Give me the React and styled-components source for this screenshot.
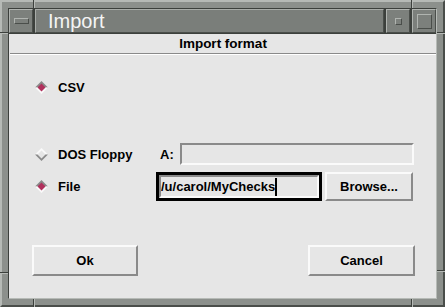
import React from "react";
import styled, { createGlobalStyle } from "styled-components";

const GlobalStyle = createGlobalStyle`
  html, body { margin: 0; padding: 0; background: #8c908c; }
  body { font-family: "Liberation Sans", Arial, Helvetica, sans-serif; }
  * { box-sizing: border-box; }
`;

const Window = styled.div`
  position: relative;
  width: 445px;
  height: 307px;
  background: #8c908c;
  border: 2px solid;
  border-color: #b6bab6 #4a4e4a #4a4e4a #b6bab6;
  padding: 6px;
`;

const Notch = styled.span`
  position: absolute;
  ${(p) =>
    p.$vertical
      ? `width: 2px; height: 8px; border-left: 1px solid #3c403c; border-right: 1px solid #b6bab6;`
      : `width: 8px; height: 2px; border-top: 1px solid #3c403c; border-bottom: 1px solid #b6bab6;`}
`;

const Inner = styled.div`
  height: 100%;
  border: 1px solid;
  border-color: #3c403c #b6bab6 #b6bab6 #3c403c;
  display: flex;
  flex-direction: column;
`;

const TitleBar = styled.div`
  display: flex;
  gap: 2px;
  height: 25px;
  background: #3c403c;
  border-bottom: 1px solid #3c403c;
`;

const TitleButton = styled.div`
  width: 24px;
  height: 24px;
  flex: none;
  background: #7c807c;
  border: 1px solid;
  border-color: #b0b4b0 #4a4e4a #4a4e4a #b0b4b0;
  display: flex;
  align-items: center;
  justify-content: center;
`;

const BevelShape = styled.span`
  display: block;
  width: ${(p) => p.$w}px;
  height: ${(p) => p.$h}px;
  border: 1px solid;
  border-color: #b0b4b0 #4a4e4a #4a4e4a #b0b4b0;
  background: #7c807c;
`;

const Title = styled.div`
  flex: 1;
  height: 24px;
  background: #7a7e7a;
  border: 1px solid;
  border-color: #a8aca8 #4a4e4a #4a4e4a #a8aca8;
  color: #f4f4f4;
  font-size: 20px;
  padding-left: 12px;
  display: flex;
  align-items: center;
`;

const Content = styled.div`
  flex: 1;
  background: #e6e6e6;
  display: flex;
  flex-direction: column;
  color: #000;
  font-size: 13px;
  font-weight: bold;
`;

const Header = styled.div`
  height: 20px;
  line-height: 19px;
  text-align: center;
  font-size: 13.5px;
  border-bottom: 1px solid #8a8a8a;
  margin-left: 1px;
  box-shadow: 0 1px 0 #ffffff;
`;

const Row = styled.div`
  display: grid;
  grid-template-columns: 121px 258px;
  align-items: center;
  padding-left: 26px;
  margin-top: ${(p) => p.$top}px;
  height: ${(p) => p.$h}px;
`;

const Option = styled.label`
  display: flex;
  align-items: center;
  gap: 10px;
`;

const Cell = styled.div`
  display: flex;
  align-items: center;
  gap: 3px;
  height: 100%;
`;

const DriveLabel = styled.span`
  width: 21px;
  padding-left: 4px;
  flex: none;
`;

const Field = styled.div`
  flex: 1;
  height: 22px;
  background: #e6e6e6;
  border: 2px solid;
  border-color: #8a8a8a #fafafa #fafafa #8a8a8a;
`;

const Focus = styled.div`
  width: 166px;
  height: 29px;
  border: 3px solid #000;
  flex: none;
`;

const FocusField = styled.div`
  height: 100%;
  background: #e6e6e6;
  border: 2px solid;
  border-color: #8a8a8a #fafafa #fafafa #8a8a8a;
  display: flex;
  align-items: center;
  white-space: nowrap;
  overflow: hidden;
  padding-left: 0;
`;

const Caret = styled.span`
  display: inline-block;
  width: 2px;
  height: 18px;
  background: #000;
  margin-left: 0px;
`;

const Button = styled.div`
  width: ${(p) => p.$w}px;
  height: ${(p) => p.$h}px;
  flex: none;
  background: #e6e6e6;
  border: 2px solid;
  border-color: #fafafa #8a8a8a #8a8a8a #fafafa;
  display: flex;
  align-items: center;
  justify-content: center;
`;

const ButtonRow = styled.div`
  display: flex;
  justify-content: space-between;
  margin-top: 44px;
  padding: 0 21px 0 23px;
`;

const Radio = ({ on }) => (
  <svg width="13" height="13" viewBox="0 0 13 13" style={{ flex: "none" }}>
    <polygon points="6.5,0 13,6.5 0,6.5" fill={on ? "#8a8a8a" : "#fafafa"} />
    <polygon points="0,6.5 13,6.5 6.5,13" fill={on ? "#fafafa" : "#8a8a8a"} />
    <polygon points="6.5,2.5 10.5,6.5 6.5,10.5 2.5,6.5" fill={on ? "#b0305c" : "#e6e6e6"} />
  </svg>
);

export default function App() {
  return (
    <>
      <GlobalStyle />
      <Window>
        <Notch $vertical style={{ left: 31, top: -2 }} />
        <Notch $vertical style={{ left: 409, top: -2 }} />
        <Notch $vertical style={{ left: 31, bottom: -2 }} />
        <Notch $vertical style={{ left: 409, bottom: -2 }} />
        <Notch style={{ left: -2, top: 30 }} />
        <Notch style={{ left: -2, top: 270 }} />
        <Notch style={{ right: -2, top: 30 }} />
        <Notch style={{ right: -2, top: 268 }} />
        <Inner>
          <TitleBar>
            <TitleButton>
              <BevelShape $w={15} $h={6} />
            </TitleButton>
            <Title>Import</Title>
            <TitleButton>
              <BevelShape $w={7} $h={7} />
            </TitleButton>
            <TitleButton>
              <BevelShape $w={15} $h={15} />
            </TitleButton>
          </TitleBar>
          <Content>
            <Header>Import format</Header>
            <Row $top={21} $h={24}>
              <Option>
                <Radio on />
                CSV
              </Option>
            </Row>
            <Row $top={43} $h={24}>
              <Option>
                <Radio />
                DOS Floppy
              </Option>
              <Cell>
                <DriveLabel>A:</DriveLabel>
                <Field />
              </Cell>
            </Row>
            <Row $top={6} $h={29}>
              <Option>
                <Radio on />
                File
              </Option>
              <Cell>
                <Focus>
                  <FocusField>
                    /u/carol/MyChecks
                    <Caret />
                  </FocusField>
                </Focus>
                <Button $w={88} $h={29}>Browse...</Button>
              </Cell>
            </Row>
            <ButtonRow>
              <Button $w={106} $h={31}>Ok</Button>
              <Button $w={107} $h={31}>Cancel</Button>
            </ButtonRow>
          </Content>
        </Inner>
      </Window>
    </>
  );
}
